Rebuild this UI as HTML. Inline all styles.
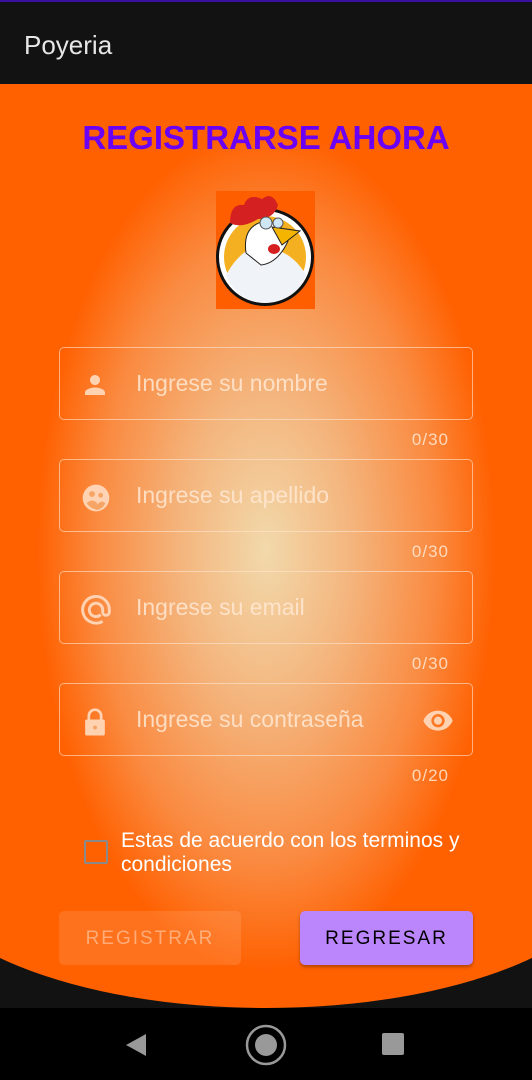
<!DOCTYPE html>
<html><head><meta charset="utf-8"><style>
*{margin:0;padding:0;box-sizing:border-box}
body{width:532px;height:1080px;overflow:hidden;background:#121212;font-family:"Liberation Sans",sans-serif;position:relative}
.top{position:absolute;left:0;top:0;width:532px;height:84px;background:#121212;border-top:2px solid #3a10a0}
.top span{position:absolute;left:24px;top:28px;color:#e6e6e6;font-size:26px}
.clip{position:absolute;left:-84px;top:84px;width:700px;height:924px;overflow:hidden;border-radius:0 0 350px 350px/0 0 143px 143px;background:radial-gradient(ellipse 250px 460px at 350px 466px,#f2d9ab 0%,#f4b47c 35%,#fa8a40 68%,#ff6000 92%)}
.title{position:absolute;left:0;width:532px;top:119px;text-align:center;color:#6a00f4;font-weight:bold;font-size:33px}
.logo{position:absolute;left:216px;top:191px;width:99px;height:118px;background:#ff5e00}
.field{position:absolute;left:59px;width:414px;height:73px;border:1.5px solid rgba(255,230,210,.6);border-radius:5px}
.field .ph{position:absolute;left:76px;top:22px;font-size:23px;color:rgba(255,232,210,.85)}
.field svg.i{position:absolute;left:20px;top:22px}
.cnt{position:absolute;right:83px;font-size:17px;letter-spacing:1px;color:rgba(255,232,210,.85)}
.nav{position:absolute;left:0;top:1008px;width:532px;height:72px;background:#000}
</style></head><body>
<div class="top"><span>Poyeria</span></div>
<div class="clip"></div>
<div class="title">REGISTRARSE AHORA</div>
<div class="logo"><svg width="99" height="118" viewBox="0 0 99 118">
<circle cx="49" cy="66" r="49" fill="#111"/><circle cx="49" cy="66" r="46" fill="#fff"/><circle cx="49" cy="66" r="41" fill="#f5b021"/>
<path d="M10 84 Q28 52 50 56 Q76 60 90 84 Q80 110 49 112 Q20 110 10 84Z" fill="#f0f4f8"/>
<path d="M30 62 Q26 34 50 30 Q68 32 72 50 Q62 72 45 74 Z" fill="#fff" stroke="#222"/>
<path d="M14 32 Q14 12 28 14 Q32 2 46 8 Q56 0 62 14 Q58 28 42 28 Q26 38 14 32Z" fill="#d42020"/>
<path d="M56 36 L84 40 L66 54 Z" fill="#f4b400" stroke="#222"/><ellipse cx="58" cy="58" rx="6" ry="5" fill="#d42020"/>
<circle cx="50" cy="32" r="6" fill="#cfe6f5" stroke="#555"/><circle cx="62" cy="32" r="5" fill="#cfe6f5" stroke="#555"/></svg></div>

<div class="field" style="top:347px"><svg class="i" width="30" height="30" viewBox="0 0 24 24"><path fill="rgba(255,215,185,.95)" d="M12 12c2.2 0 4-1.8 4-4s-1.8-4-4-4-4 1.8-4 4 1.8 4 4 4zm0 2c-2.7 0-8 1.3-8 4v2h16v-2c0-2.7-5.3-4-8-4z"/></svg><span class="ph">Ingrese su nombre</span></div>
<div class="cnt" style="top:430px">0/30</div>
<div class="field" style="top:459px"><svg class="i" width="32" height="32" viewBox="0 0 24 24"><circle cx="12" cy="12" r="10" fill="rgba(255,215,185,.95)"/><circle cx="9" cy="9" r="2.2" fill="#f7a566"/><circle cx="15.5" cy="10" r="1.8" fill="#f7a566"/><path d="M5 16q4-4 8 0v5q-5-1-8-5zM13 17q3-4 6-1-2 4-6 5z" fill="#f7a566"/></svg><span class="ph">Ingrese su apellido</span></div>
<div class="cnt" style="top:542px">0/30</div>
<div class="field" style="top:571px"><svg class="i" width="32" height="32" viewBox="0 0 24 24"><path fill="none" stroke="rgba(255,215,185,.95)" stroke-width="2.2" d="M17 20.5A10 10 0 1 1 22 12v1.5a2.5 2.5 0 0 1-5 0V12a5 5 0 1 0-1.5 3.5"/></svg><span class="ph">Ingrese su email</span></div>
<div class="cnt" style="top:654px">0/30</div>
<div class="field" style="top:683px"><svg class="i" width="30" height="32" viewBox="0 0 24 26"><path fill="none" stroke="rgba(255,215,185,.95)" stroke-width="2.2" d="M7 11V8a5 5 0 0 1 10 0v3"/><rect x="4" y="11" width="16" height="13" rx="1.5" fill="rgba(255,215,185,.95)"/><circle cx="12" cy="17.5" r="1.6" fill="#f7a566"/></svg><span class="ph">Ingrese su contraseña</span>
<svg style="position:absolute;right:16px;top:20px" width="36" height="32" viewBox="0 0 24 24"><path fill="rgba(255,215,185,.95)" d="M12 5C7 5 2.7 8.1 1 12.5 2.7 16.9 7 20 12 20s9.3-3.1 11-7.5C21.3 8.1 17 5 12 5zm0 12.5a5 5 0 1 1 0-10 5 5 0 0 1 0 10zm0-8a3 3 0 1 0 0 6 3 3 0 0 0 0-6z"/></svg></div>
<div class="cnt" style="top:766px">0/20</div>

<div style="position:absolute;left:84px;top:840px;width:24px;height:24px;border:2.5px solid #8a8a8a;border-radius:2px"></div>
<div style="position:absolute;left:121px;top:829px;width:380px;color:#fff;font-size:21px;line-height:24px">Estas de acuerdo con los terminos y condiciones</div>
<div style="position:absolute;left:59px;top:911px;width:182px;height:54px;border-radius:5px;background:rgba(255,200,160,.18);color:rgba(255,210,180,.6);font-size:19px;letter-spacing:2px;text-align:center;line-height:56px">REGISTRAR</div>
<div style="position:absolute;left:300px;top:911px;width:173px;height:54px;border-radius:5px;background:#bb86fc;color:#000;font-size:19px;letter-spacing:2px;text-align:center;line-height:56px;box-shadow:0 2px 3px rgba(0,0,0,.3)">REGRESAR</div>

<div class="nav">
<svg style="position:absolute;left:124px;top:24px" width="24" height="26" viewBox="0 0 24 26"><path d="M22 2V24L2 13Z" fill="#999"/></svg>
<svg style="position:absolute;left:245px;top:16px" width="42" height="42" viewBox="0 0 42 42"><circle cx="21" cy="21" r="19" fill="none" stroke="#999" stroke-width="2.5"/><circle cx="21" cy="21" r="11" fill="#999"/></svg>
<div style="position:absolute;left:382px;top:25px;width:22px;height:22px;background:#999;border-radius:2px"></div>
</div>
</body></html>
